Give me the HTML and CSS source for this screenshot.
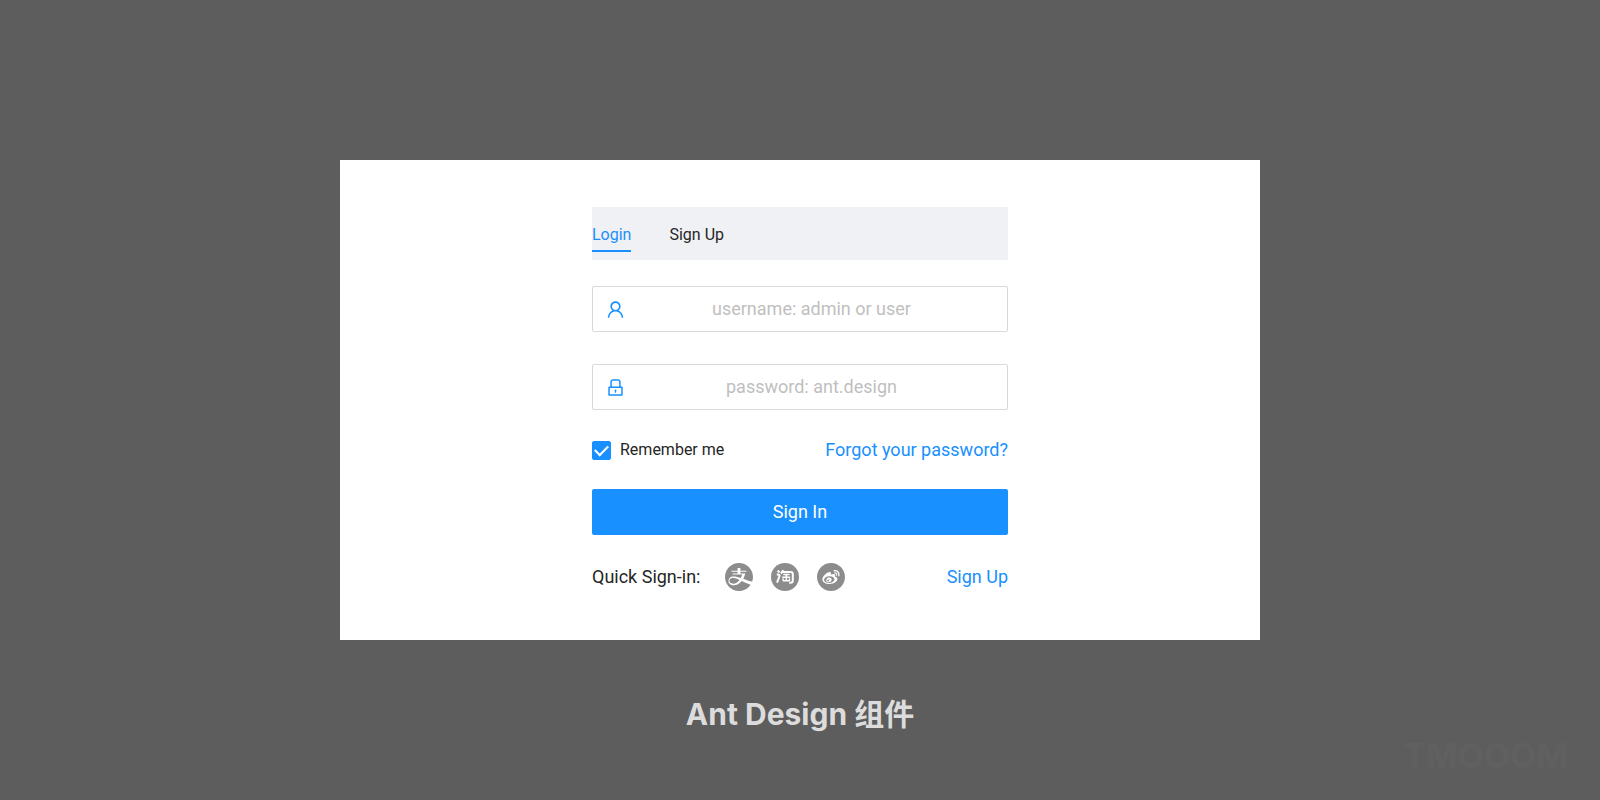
FILE: index.html
```html
<!DOCTYPE html>
<html lang="zh-CN">
<head>
<meta charset="utf-8">
<title>Ant Design 组件</title>
<link rel="stylesheet" href="styles.css">
</head>
<body>
<main class="stage">
  <section class="card">
    <form class="login">
      <nav class="tabs">
        <a class="tab tab-active" href="#login">Login</a>
        <a class="tab" href="#signup">Sign Up</a>
      </nav>
      <div class="field">
        <svg class="field-icon" viewBox="0 0 1024 1024" aria-hidden="true"><path d="M858.5 763.6a374 374 0 00-80.6-119.5 375.63 375.63 0 00-119.5-80.6c-.4-.2-.8-.3-1.2-.5C719.5 518 760 444.7 760 362c0-137-111-248-248-248S264 225 264 362c0 82.7 40.5 156 102.8 201.1-.4.2-.8.3-1.2.5-44.8 18.9-85 46-119.5 80.6a375.63 375.63 0 00-80.6 119.5A371.7 371.7 0 00136 901.8a8 8 0 008 8.2h60c4.4 0 7.9-3.5 8-7.8 2-77.2 33-149.5 87.8-204.3 56.7-56.7 132-87.9 212.2-87.9s155.5 31.2 212.2 87.9C779 752.7 810 825 812 902.2c.1 4.4 3.6 7.8 8 7.8h60a8 8 0 008-8.2c-1-47.8-10.9-94.3-29.5-138.2zM512 534c-45.9 0-89.1-17.9-121.6-50.4S340 407.9 340 362c0-45.9 17.9-89.1 50.4-121.6S466.1 190 512 190s89.1 17.9 121.6 50.4S684 316.1 684 362c0 45.9-17.9 89.1-50.4 121.6S557.9 534 512 534z"/></svg>
        <input class="field-input" type="text" aria-label="Username" placeholder="username: admin or user">
      </div>
      <div class="field">
        <svg class="field-icon" viewBox="0 0 1024 1024" aria-hidden="true"><path d="M832 464h-68V240c0-70.7-57.3-128-128-128H388c-70.7 0-128 57.3-128 128v224h-68c-17.7 0-32 14.3-32 32v384c0 17.7 14.3 32 32 32h640c17.7 0 32-14.3 32-32V496c0-17.7-14.3-32-32-32zM332 240c0-30.9 25.1-56 56-56h248c30.9 0 56 25.1 56 56v224H332V240zm460 600H232V536h560v304zM484 701v53c0 4.4 3.6 8 8 8h40c4.4 0 8-3.6 8-8v-53a48.1 48.1 0 10-56 0z"/></svg>
        <input class="field-input" type="password" aria-label="Password" placeholder="password: ant.design">
      </div>
      <div class="options">
        <label class="remember"><input class="check" type="checkbox" checked>Remember me</label>
        <a class="link" href="#forgot">Forgot your password?</a>
      </div>
      <button class="submit" type="button">Sign In</button>
      <div class="quick">
        <span class="quick-label">Quick Sign-in:</span>
        <a class="social" href="#alipay" aria-label="Alipay"><svg class="social-icon" viewBox="64 64 896 896"><path d="M308.6 545.7c-19.8 2-57.1 10.7-77.4 28.6-61 53-24.5 150 99 150 71.8 0 143.5-45.7 199.8-119-80.2-38.9-148.1-66.8-221.4-59.6zm460.5 67c100.1 33.4 154.7 43 166.7 44.8A445.9 445.9 0 00960 512c0-247.4-200.6-448-448-448S64 264.6 64 512s200.6 448 448 448c155.9 0 293.2-79.7 373.5-200.5-75.6-29.8-213.6-85-286.8-120.1-69.9 85.7-160.1 137.8-253.7 137.8-158.4 0-212.1-138.1-137.2-229 16.3-19.8 44.2-38.7 87.3-49.4 67.5-16.5 175 10.3 275.7 43.4 18.1-33.3 33.4-69.9 44.7-108.9H305.1V402h160v-56.2H271.3v-31.3h193.8v-80.1s0-13.5 13.7-13.5H557v93.6h191.7v31.3H557.1V402h156.4c-15 61.1-37.7 117.4-66.2 166.8 47.5 17.1 90.1 33.3 121.8 43.9z"/></svg></a>
        <a class="social" href="#taobao" aria-label="Taobao"><svg class="social-icon" viewBox="0 0 28 28"><circle cx="14" cy="14" r="14"/><g fill="none" stroke="#fff" stroke-width="2" stroke-linejoin="round"><path d="M6.500 7.800l2.200 1.400M5.800 11.600h1.500q2 .4 .9 2.400L6 19.600M12.200 7.200q-.8 2-2.400 3.200M11.400 9h8.200q2.200 0 2.200 2.200v6.400q0 2.200-2.200 2.200h-1.400"/><path stroke-width="1.500" d="M12.300 11.600h6.200M11.200 14.200h8M15.300 11.600v6.200M12.200 15.600v2.200h6.200v-2.200"/></g></svg></a>
        <a class="social" href="#weibo" aria-label="Weibo"><svg class="social-icon" viewBox="64 64 896 896"><path d="M512 64C264.6 64 64 264.6 64 512s200.6 448 448 448 448-200.6 448-448S759.4 64 512 64zm-44.4 672C353.1 736 236 680.4 236 588.9c0-47.8 30.2-103.1 82.3-155.3 69.5-69.6 150.6-101.4 181.1-70.8 13.5 13.5 14.8 36.8 6.1 64.6-4.5 14 13.1 6.3 13.1 6.3 56.2-23.6 105.2-25 123.1.7 9.6 13.7 8.6 32.8-.2 55.1-4.1 10.2 1.3 11.8 9 14.1 31.7 9.8 66.9 33.6 66.9 75.5.2 69.5-99.7 156.9-249.8 156.9zm207.3-290.8a34.9 34.9 0 00-7.2-34.1 34.68 34.68 0 00-33.1-10.7 18.24 18.24 0 01-7.6-35.7c24.1-5.1 50.1 2.3 67.7 21.9 17.7 19.6 22.4 46.3 14.9 69.8a18.13 18.13 0 01-22.9 11.7 18.18 18.18 0 01-11.8-22.9zm106 34.3s0 .1 0 0a21.1 21.1 0 01-26.6 13.7 21.19 21.19 0 01-13.6-26.7c11-34.2 4-73.2-21.7-101.8a104.04 104.04 0 00-98.9-32.1 21.14 21.14 0 01-25.1-16.3 21.07 21.07 0 0116.2-25.1c49.4-10.5 102.8 4.8 139.1 45.1 36.3 40.2 46.1 95.1 30.6 143.2zm-334.5 6.1c-91.4 9-160.7 65.1-154.7 125.2 5.9 60.1 84.8 101.5 176.2 92.5 91.4-9.1 160.7-65.1 154.7-125.3-5.9-60.1-84.8-101.5-176.2-92.4zm80.2 141.7c-18.7 42.3-72.3 64.8-117.8 50.1-43.9-14.2-62.5-57.7-43.3-96.8 18.9-38.4 68-60.1 111.5-48.8 45 11.7 68 54.2 49.6 95.5zm-93-32.2c-14.2-5.9-32.4.2-41.2 13.9-8.8 13.8-4.7 30.2 9.3 36.6 14.3 6.5 33.2.3 42-13.8 8.8-14.3 4.2-30.6-10.1-36.7zm34.9-14.5c-5.4-2.2-12.2.5-15.4 5.8-3.1 5.4-1.4 11.5 4.1 13.8 5.500 2.300 12.600-.3 15.800-5.800 3-5.600 1-11.800-4.500-13.800z"/></svg></a>
        <a class="link quick-signup" href="#signup">Sign Up</a>
      </div>
    </form>
  </section>
  <h1 class="caption">Ant Design 组件</h1>
  <p class="watermark">TMOOOM</p>
</main>
</body>
</html>
```
FILE: styles.css
```css
* { box-sizing: border-box; }

body {
  margin: 0;
  background: #5d5d5d;
  color: #262626;
  font-family: Roboto, "Noto Sans CJK SC", sans-serif;
  font-size: 18px;
  line-height: 24px;
}

a { text-decoration: none; }

.stage {
  min-height: 100vh;
  padding: 160px 32px 0;
  display: flex;
  flex-direction: column;
  align-items: center;
}

.card {
  width: 100%;
  max-width: 920px;
  padding: 47px 24px 49px;
  background: #fff;
  display: flex;
  justify-content: center;
}

.login {
  width: 100%;
  max-width: 416px;
  display: flex;
  flex-direction: column;
}

.tabs {
  display: flex;
  gap: 38px;
  padding: 11px 0 8px;
  margin-bottom: 26px;
  background: #f0f1f5;
  font-size: 16px;
}

.tab {
  padding: 5px 0 3px;
  border-bottom: 2px solid transparent;
  color: #262626;
}

.tab-active {
  color: #1890ff;
  border-bottom-color: #1890ff;
}

.field {
  height: 46px;
  margin-bottom: 32px;
  padding: 0 14px 0 12px;
  display: flex;
  align-items: center;
  gap: 4px;
  border: 1px solid #d9d9d9;
  border-radius: 2px;
}

.field-icon {
  width: 21px;
  height: 21px;
  flex: none;
  fill: #1890ff;
}

.field-input {
  flex: 1;
  min-width: 0;
  padding: 0;
  border: 0;
  outline: 0;
  background: none;
  font: inherit;
  text-align: center;
}

.field-input::placeholder {
  color: #bfbfbf;
  opacity: 1;
}

.options {
  display: flex;
  justify-content: space-between;
  align-items: center;
  margin: -4px 0 27px;
}

.remember {
  display: flex;
  align-items: center;
  gap: 9px;
  font-size: 16px;
}

.check {
  appearance: none;
  width: 19px;
  height: 19px;
  margin: 0;
  border: 1px solid #d9d9d9;
  border-radius: 2px;
  display: grid;
  place-items: center;
}

.check:checked {
  background: #1890ff;
  border-color: #1890ff;
}

.check:checked::before {
  content: "";
  width: 11px;
  height: 6px;
  margin-bottom: 3px;
  border: solid #fff;
  border-width: 0 0 2px 2px;
  transform: rotate(-45deg);
}

.link { color: #1890ff; }

.submit {
  height: 46px;
  border: 0;
  border-radius: 2px;
  background: #1890ff;
  color: #fff;
  font: inherit;
}

.quick {
  margin-top: 28px;
  display: flex;
  align-items: center;
  gap: 18px;
}

.quick-label { margin-right: 7px; }

.social { display: flex; }

.social-icon {
  width: 28px;
  height: 28px;
  fill: #8c8c8c;
}

.quick-signup { margin-left: auto; }

.caption {
  margin: 56px 0 0;
  color: #dcdcdc;
  font-family: Inter, "Noto Sans CJK SC", sans-serif;
  font-size: 30px;
  font-weight: 700;
  line-height: 36px;
}

.watermark {
  align-self: flex-end;
  margin: 6px 0 0;
  color: #606060;
  font-family: Inter, sans-serif;
  font-size: 34px;
  font-weight: 700;
  line-height: 36px;
}
```
